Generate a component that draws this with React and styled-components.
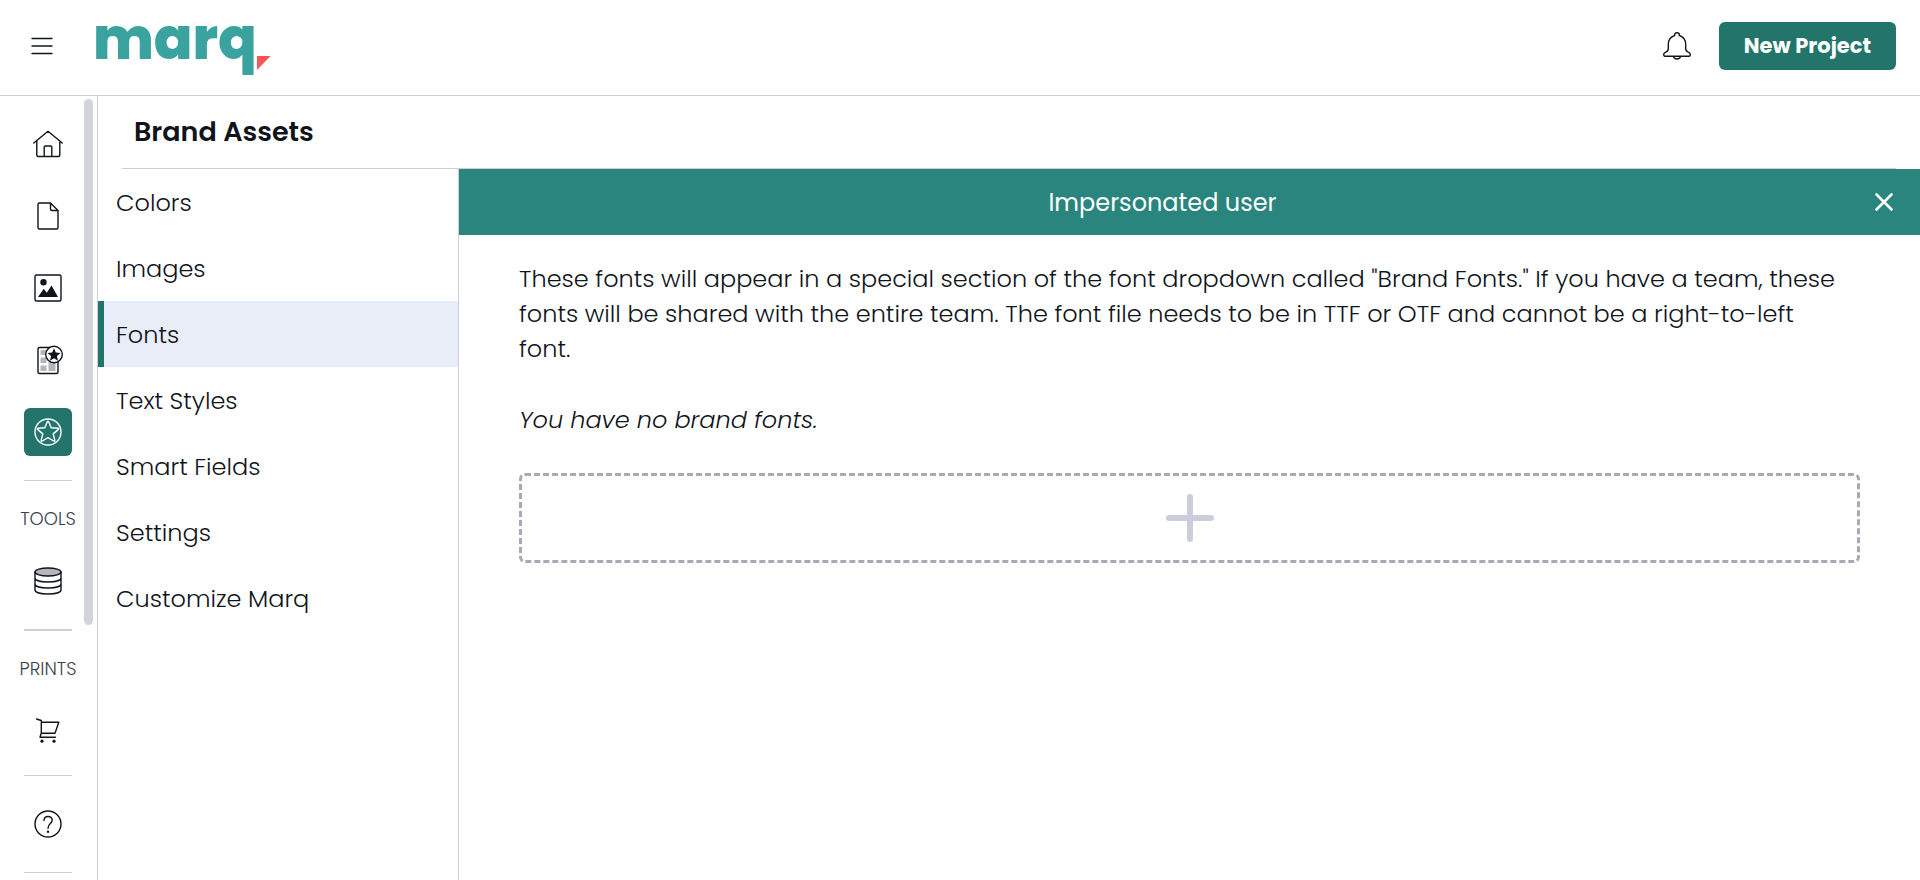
import React from "react";
import styled, { createGlobalStyle, css } from "styled-components";

const GlobalStyle = createGlobalStyle`
  *, *::before, *::after { box-sizing: border-box; }
  body { margin: 0; background: #fff; }
  body, button { font-family: Poppins, Inter, sans-serif; color: #10141b; }
  button { border: 0; padding: 0; background: none; cursor: pointer; }
  svg { display: block; }
`;

const line = "#c9ceda";
const teal = "#23756c";

const Page = styled.div`
  display: flex;
  flex-direction: column;
  height: 100vh;
`;

const Header = styled.header`
  display: flex;
  align-items: center;
  flex: none;
  height: 96px;
  padding: 0 24px 4px;
  border-bottom: 1px solid ${line};
`;

const IconButton = styled.button`
  display: grid;
  place-items: center;
  flex: none;
  width: 36px;
  height: 48px;
  color: ${(p) => (p.$light ? "#fff" : "#10141b")};
`;

const Logo = styled.a`
  display: flex;
  align-items: flex-start;
  height: 48px;
  margin-left: 33px;
  color: #3aa3a0;
  font-size: 57px;
  font-weight: 800;
  line-height: 34px;
  text-decoration: none;
`;

const LogoMark = styled.svg`
  align-self: flex-end;
`;

const HeaderActions = styled.div`
  display: flex;
  align-items: center;
  gap: 24px;
  margin-left: auto;
`;

const PrimaryButton = styled.button`
  height: 48px;
  padding: 0 25px;
  border-radius: 6px;
  background: ${teal};
  color: #fff;
  font-size: 21px;
  font-weight: 700;
`;

const Body = styled.div`
  display: flex;
  flex: 1;
  min-height: 0;
`;

const Rail = styled.aside`
  position: relative;
  display: flex;
  flex: none;
  width: 98px;
  border-right: 1px solid ${line};
  overflow: hidden;
`;

const RailNav = styled.nav`
  display: flex;
  flex-direction: column;
  align-items: center;
  flex: none;
  width: 96px;
  padding-top: 24px;
`;

const RailGroup = styled.div`
  display: flex;
  flex-direction: column;
  align-items: center;
  gap: 24px;
`;

const RailLink = styled.a`
  display: grid;
  place-items: center;
  width: 48px;
  height: 48px;
  border-radius: 6px;
  color: #10141b;
  ${(p) => p.$active && css`background: ${teal}; color: #fff;`}
`;

const RailRule = styled.hr`
  flex: none;
  width: 48px;
  height: ${(p) => (p.$thick ? 2 : 1)}px;
  margin: ${(p) => (p.$tight ? "20px 0 24px" : "24px 0 0")};
  border: 0;
  background: ${line};
`;

const RailLabel = styled.div`
  margin: 24px 0;
  color: #3c424d;
  font-size: 18px;
  font-weight: 300;
  line-height: 28px;
`;

const ScrollTrack = styled.div`
  position: absolute;
  top: 3px;
  bottom: 0;
  left: 84px;
  width: 9px;
`;

const ScrollThumb = styled.div`
  height: 67.4%;
  border-radius: 5px;
  background: #d1d5da;
`;

const Main = styled.main`
  display: flex;
  flex-direction: column;
  flex: 1;
  min-width: 0;
`;

const TitleBar = styled.div`
  flex: none;
  height: 73px;
  margin: 0 24px;
  padding: 0 12px;
  border-bottom: 1px solid ${line};
`;

const Title = styled.h1`
  margin: 0;
  font-size: 27px;
  font-weight: 600;
  line-height: 72px;
`;

const Columns = styled.div`
  display: flex;
  flex: 1;
  min-height: 0;
`;

const SideNav = styled.nav`
  flex: none;
  width: 361px;
  border-right: 1px solid ${line};
`;

const SideLink = styled.a`
  display: block;
  height: 66px;
  padding: 2px 12px 0;
  border-left: 6px solid ${(p) => (p.$active ? teal : "transparent")};
  background: ${(p) => (p.$active ? "#e9edf8" : "transparent")};
  color: #10141b;
  font-size: 24px;
  font-weight: 300;
  line-height: 64px;
  text-decoration: none;
`;

const Content = styled.section`
  flex: 1;
  min-width: 0;
`;

const Banner = styled.div`
  display: flex;
  align-items: center;
  height: 66px;
  padding-right: 18px;
  background: #29857d;
  color: #fff;
`;

const BannerText = styled.p`
  flex: 1;
  margin: 0;
  font-size: 24px;
  font-weight: 400;
  text-align: center;
`;

const ContentBody = styled.div`
  padding: 26px 60px;
  font-size: 24px;
  font-weight: 300;
  line-height: 35px;
`;

const Copy = styled.p`
  margin: 0;
  padding-right: 12px;
`;

const EmptyNote = styled.p`
  margin: 36px 0;
  font-style: italic;
`;

const AddFont = styled.button`
  display: grid;
  place-items: center;
  width: 100%;
  height: 90px;
  border: 3px dashed #a6aab4;
  border-radius: 6px;
  color: #c9ceda;
`;

const Icon = ({ size = 30, w = 1.4, children }) => (
  <svg width={size} height={size} viewBox={`0 0 ${size} ${size}`} fill="none" stroke="currentColor"
    strokeWidth={w} strokeLinecap="round" strokeLinejoin="round" aria-hidden="true">{children}</svg>
);

const HomeIcon = () => (
  <Icon><path d="M.8 14 15 2.200 29.200 14M3.800 11.700V26q0 1.500 1.500 1.500h20q1.500 0 1.500-1.500V11.700M11.200 27.500V18q0-1 1-1h5.600q1 0 1 1v9.500" /></Icon>
);
const DocIcon = () => (
  <Icon><path d="M17.500 2H6.500Q5 2 5 3.500v23Q5 28 6.500 28h17q1.500 0 1.500-1.500V9.500L17.500 2v6q0 1.500 1.500 1.500h6" /></Icon>
);
const ImageIcon = () => (
  <Icon>
    <rect x="2" y="2" width="26" height="26" rx="1.500" />
    <circle cx="10.500" cy="9.200" r="3.200" fill="currentColor" stroke="none" />
    <path d="M5 24 10.800 15.800 13.800 19.800 18.500 12.500 25 24Z" fill="currentColor" stroke="none" />
  </Icon>
);
const TemplateIcon = () => (
  <Icon>
    <rect x="5" y="2.500" width="20" height="26" rx="1.500" />
    <path fill="#b4b6ba" stroke="none" d="M7.500 5h6v5h-6zM7.500 12.500h6v5.500h-6zM7.500 20.500h6V26h-6zM15.500 17h7v9h-7z" />
    <circle cx="21" cy="9.500" r="8.300" fill="#fff" />
    <path fill="currentColor" stroke="none" d="m21 3.200 1.800 4.400 4.700.4-3.600 3.100 1.100 4.600-4-2.500-4 2.500 1.100-4.600L14.500 8l4.700-.4z" />
  </Icon>
);
const BrandIcon = () => (
  <Icon>
    <circle cx="15" cy="15" r="13" />
    <path d="M14.300 4.800q.7-1.300 1.400 0l2.500 6 6.500.5q1.500.2.5 1.300l-5 4.300 1.600 6.300q.2 1.500-1.100.8L15 20.600 9.300 24q-1.300.7-1.100-.8l1.600-6.300-5-4.300q-1-1.100.5-1.300l6.500-.5z" />
  </Icon>
);
const DataIcon = () => (
  <Icon>
    <ellipse cx="15" cy="6" rx="13" ry="4" fill="#b4b6ba" />
    <path d="M2 6v18c0 5.300 26 5.300 26 0V6M2 12c0 5.300 26 5.300 26 0M2 18c0 5.300 26 5.300 26 0" />
  </Icon>
);
const CartIcon = () => (
  <Icon>
    <path d="m3.500 3 4.800 1.500V17L7 21.200h15.500M8.300 6.200h17.500L22 17.200H8.300" />
    <g fill="currentColor" stroke="none"><circle cx="9" cy="25.200" r="1.600" /><circle cx="21" cy="25.200" r="1.600" /></g>
  </Icon>
);
const HelpIcon = () => (
  <Icon>
    <circle cx="15" cy="15" r="13" />
    <path d="M11 11.500c0-5.300 8.200-5.300 8.200-.3 0 3.500-4.200 3.300-4.200 8" />
    <circle cx="15" cy="22.700" r="1.200" fill="currentColor" stroke="none" />
  </Icon>
);
const BellIcon = () => (
  <Icon><path d="M12.700 4.500v-.7c0-2.800 4.600-2.800 4.600 0v.7c4 1.200 6.400 4.500 6.400 9v4.300c0 2 .8 2.700 2.500 3.300 3 1.200 2.400 4.100.8 4.100H3c-1.600 0-2.200-2.900.8-4.100 1.700-.6 2.500-1.300 2.500-3.300v-4.300c0-4.500 2.400-7.800 6.400-9M11.300 25.400c1 3.500 6.400 3.500 7.400 0" /></Icon>
);

const mainLinks = [
  ["Home", HomeIcon],
  ["Documents", DocIcon],
  ["Images", ImageIcon],
  ["Templates", TemplateIcon],
  ["Brand assets", BrandIcon],
];

const sections = ["Colors", "Images", "Fonts", "Text Styles", "Smart Fields", "Settings", "Customize Marq"];

export default function App() {
  return (
    <Page>
      <GlobalStyle />
      <Header>
        <IconButton aria-label="Menu">
          <Icon size={24}><path d="M2 4.500h20M2 12h20M2 19.500h20" /></Icon>
        </IconButton>
        <Logo href="#" aria-label="marq">
          marq
          <LogoMark width="14" height="14" viewBox="0 0 14 14" aria-hidden="true"><path d="M0 0h13.500L0 14z" fill="#f95655" /></LogoMark>
        </Logo>
        <HeaderActions>
          <IconButton aria-label="Notifications"><BellIcon /></IconButton>
          <PrimaryButton>New Project</PrimaryButton>
        </HeaderActions>
      </Header>
      <Body>
        <Rail>
          <RailNav aria-label="Main">
            <RailGroup>
              {mainLinks.map(([name, Glyph]) => (
                <RailLink key={name} href="#" aria-label={name} $active={name === "Brand assets"}><Glyph /></RailLink>
              ))}
            </RailGroup>
            <RailRule />
            <RailLabel>TOOLS</RailLabel>
            <RailLink href="#" aria-label="Data"><DataIcon /></RailLink>
            <RailRule $thick />
            <RailLabel>PRINTS</RailLabel>
            <RailLink href="#" aria-label="Print orders"><CartIcon /></RailLink>
            <RailRule $tight />
            <RailLink href="#" aria-label="Help"><HelpIcon /></RailLink>
            <RailRule />
          </RailNav>
          <ScrollTrack><ScrollThumb /></ScrollTrack>
        </Rail>
        <Main>
          <TitleBar><Title>Brand Assets</Title></TitleBar>
          <Columns>
            <SideNav aria-label="Brand assets">
              {sections.map((s) => (
                <SideLink key={s} href="#" $active={s === "Fonts"}>{s}</SideLink>
              ))}
            </SideNav>
            <Content>
              <Banner>
                <BannerText>Impersonated user</BannerText>
                <IconButton $light aria-label="Close">
                  <Icon size={20} w={2.6}><path d="m2.500 2.500 15 15m0-15-15 15" /></Icon>
                </IconButton>
              </Banner>
              <ContentBody>
                <Copy>
                  These fonts will appear in a special section of the font dropdown called "Brand Fonts." If you have a
                  team, these fonts will be shared with the entire team. The font file needs to be in TTF or OTF and
                  cannot be a right-to-left font.
                </Copy>
                <EmptyNote>You have no brand fonts.</EmptyNote>
                <AddFont aria-label="Add font">
                  <Icon size={48} w={6}><path d="M24 3v42M3 24h42" /></Icon>
                </AddFont>
              </ContentBody>
            </Content>
          </Columns>
        </Main>
      </Body>
    </Page>
  );
}
